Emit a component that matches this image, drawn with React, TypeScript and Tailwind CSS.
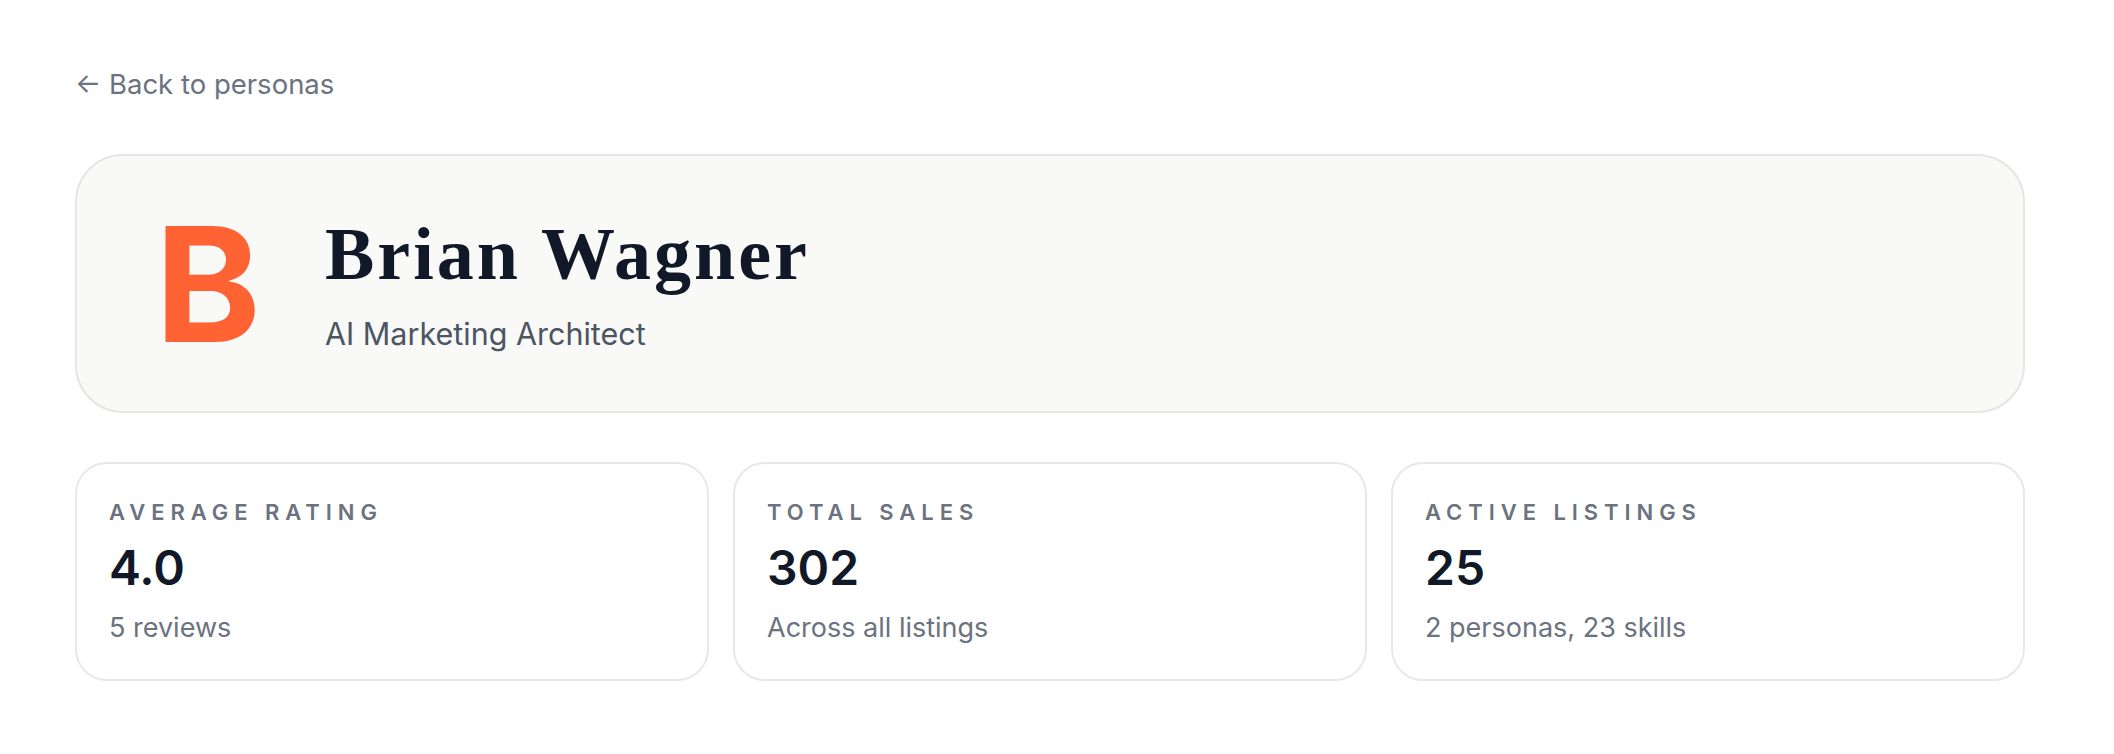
const stats = [
  { label: "Average Rating", value: "4.0", sub: "5 reviews" },
  { label: "Total Sales", value: "302", sub: "Across all listings" },
  { label: "Active Listings", value: "25", sub: "2 personas, 23 skills" },
];

function StatCard({ label, value, sub }: { label: string; value: string; sub: string }) {
  return (
    <div className="h-[219px] rounded-[32px] border-2 border-[#e8e8e8] bg-white px-[32px] pt-[32px]">
      <p className="text-[22px] leading-[32px] font-semibold uppercase tracking-[0.27em] text-[#6b7280]">{label}</p>
      <p className="mt-[8px] text-[48px] leading-[64px] font-semibold text-[#111827]">{value}</p>
      <p className="mt-[8px] text-[27px] leading-[40px] text-[#6b7280]">{sub}</p>
    </div>
  );
}

export default function App() {
  return (
    <div
      className="min-h-screen bg-white pl-[75px] pr-[89px] pt-[64px]"
      style={{ fontFamily: "Inter, 'Noto Sans', sans-serif" }}
    >
      <a href="#" className="block text-[27.5px] leading-[40px] text-[#6b7280]">
        ← Back to personas
      </a>

      {/* Header card */}
      <div className="mt-[50px] flex h-[259px] items-center rounded-[48px] border-2 border-[#e5e5e5] bg-[#f9f9f8] pl-[63px]">
        <div className="flex h-[136px] w-[136px] items-center justify-center">
          <span className="text-[160px] leading-none font-bold text-[#ff6233]">B</span>
        </div>
        <div className="ml-[49px] flex flex-col">
          <h1
            className="text-[74px] leading-[80px] font-bold tracking-[3px] text-[#111827]"
            style={{ fontFamily: "'Liberation Serif', 'DejaVu Serif', serif" }}
          >
            Brian Wagner
          </h1>
          <p className="mt-[20px] text-[30.5px] leading-[40px] text-[#4b5563]">AI Marketing Architect</p>
        </div>
      </div>

      {/* Stats */}
      <div className="mt-[49px] grid grid-cols-3 gap-[24px]">
        {stats.map((s) => (
          <StatCard key={s.label} {...s} />
        ))}
      </div>
    </div>
  );
}
